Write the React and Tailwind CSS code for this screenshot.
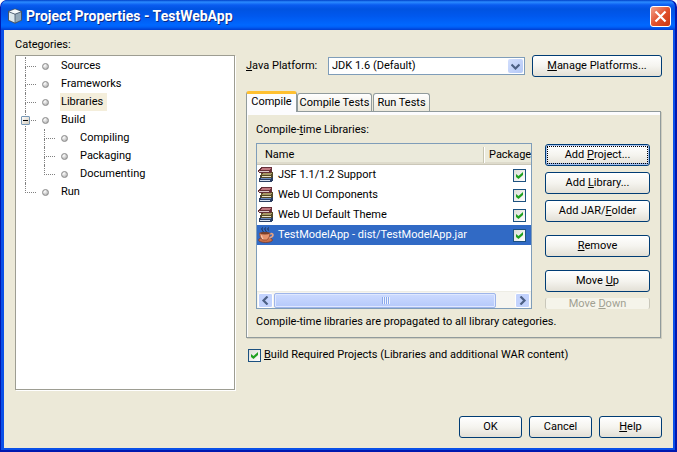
import { useState } from 'react'

const categories = [
  { name: 'Sources' },
  { name: 'Frameworks' },
  { name: 'Libraries' },
  { name: 'Build', children: ['Compiling', 'Packaging', 'Documenting'] },
  { name: 'Run' },
]

const initialLibraries = [
  { name: 'JSF 1.1/1.2 Support', type: 'library', packaged: true },
  { name: 'Web UI Components', type: 'library', packaged: true },
  { name: 'Web UI Default Theme', type: 'library', packaged: true },
  { name: 'TestModelApp - dist/TestModelApp.jar', type: 'jar', packaged: true },
]

function CubeIcon() {
  return (
    <svg className="h-4 w-4 shrink-0" viewBox="0 0 16 16" aria-hidden="true">
      <path d="M8 0.5 15 3v9.5L8 15.8 1 12.5V3z" fill="#44566a" />
      <path d="M8 1.3 13.8 3.4 8 5.8 2.2 3.4z" fill="#f4f9fb" />
      <path d="M2 4.2 7.6 6.5v8L2 12z" fill="#dce8ec" />
      <path d="M14 4.2 8.4 6.5v8L14 12z" fill="#93a9b8" />
    </svg>
  )
}

function BooksIcon() {
  return (
    <svg className="h-4 w-4 shrink-0" viewBox="0 0 16 16" shapeRendering="crispEdges" aria-hidden="true">
      {/* bottom book */}
      <path d="M3 10h12v3l-2 2H1v-4z" fill="#2b3f63" />
      <path d="M3 11h10l-1 1H2z" fill="#6d8cc0" />
      <path d="M2 13h10v1H2z" fill="#d5dfef" />
      {/* middle book */}
      <path d="M4 5h11v4l-2 2H3L2 9z" fill="#544a28" />
      <path d="M5 6h9l-1 2H4z" fill="#a59762" />
      <path d="M4 9h9v1H4z" fill="#e8e2c6" />
      {/* top book */}
      <path d="M4 0h10v4l-2 2H1L0 5V3z" fill="#663038" />
      <path d="M4 1h9l-2 2H2z" fill="#c17880" />
      <path d="M1 4h10v1H1z" fill="#dccbcd" />
    </svg>
  )
}

function CoffeeIcon() {
  return (
    <svg className="h-4 w-4 shrink-0" viewBox="0 0 16 16" aria-hidden="true">
      <path d="M4.500 0.500q-1.500 1.500 0 3t0 2M7.500 0.500q-1.500 1.500 0 3t0 2M10.500 0.500q-1.500 1.500 0 3" fill="none" stroke="#1d2c48" />
      <ellipse cx="7.500" cy="13" rx="7" ry="2.500" fill="#c9714b" stroke="#7b3520" strokeWidth="0.7" />
      <path d="M11.500 7q3.500-1 3.500 1t-4 3" fill="none" stroke="#eba583" strokeWidth="1.600" />
      <path d="M1.500 6h10.500q0 4.500-3 7H4.500q-3-2.500-3-7z" fill="#e6946e" stroke="#8a4229" strokeWidth="0.7" />
      <ellipse cx="6.800" cy="6.200" rx="4.600" ry="1.200" fill="#7a3f2a" />
      <path d="M3.500 8.500q.5 2.500 1.500 3.500" stroke="#fbdcc8" fill="none" />
    </svg>
  )
}

function Arrow({ d }) {
  return (
    <svg className="h-[9px] w-[9px]" viewBox="0 0 9 9" fill="none" stroke="#4d6185" strokeWidth="2.2" aria-hidden="true">
      <path d={d} />
    </svg>
  )
}

function Check({ label, ...props }) {
  return (
    <span className="grid h-[13px] w-[13px] shrink-0 place-items-center">
      <input
        type="checkbox"
        aria-label={label}
        className="peer col-start-1 row-start-1 h-[13px] w-[13px] appearance-none border border-[#1c5180] bg-linear-to-br from-[#dcdcd7] to-white"
        {...props}
      />
      <svg className="pointer-events-none invisible col-start-1 row-start-1 h-[7px] w-[7px] peer-checked:visible" viewBox="0 0 7 7" aria-hidden="true">
        <path d="M0 2v3l2.500 2L7 3V0L2.500 4z" fill="#21a121" />
      </svg>
    </span>
  )
}

function Button({ className = '', children, ...props }) {
  return (
    <button
      type="button"
      className={`h-[22px] rounded-[3px] border border-[#003c74] bg-linear-to-b from-white via-[#f5f4ef] to-[#e3e0d6] text-center leading-4 ${className}`}
      {...props}
    >
      {children}
    </button>
  )
}

function TreeRow({ name, last, expander, selected, onSelect }) {
  return (
    <div className="relative flex h-[18px] items-center">
      <span className="h-full w-[11px] shrink-0">
        <span className="block h-[10px] border-b border-l border-dotted border-[#808080]" />
        {!last && <span className="block h-2 border-l border-dotted border-[#808080]" />}
      </span>
      {expander && (
        <button
          type="button"
          aria-label="Collapse"
          className="absolute top-[5px] -left-1 flex h-[9px] w-[9px] items-center justify-center rounded-[1px] border border-[#7898b5] bg-linear-to-br from-white to-[#d2cabb]"
        >
          <span className="h-px w-[5px] bg-black" />
        </button>
      )}
      <span className="ml-[6px] h-[7px] w-[7px] shrink-0 rounded-full border border-[#8a8a8a] bg-radial-[at_35%_30%] from-white to-[#a0a0a0]" />
      <button
        type="button"
        onClick={onSelect}
        className={`ml-[11px] h-[18px] pr-1 pl-px leading-[18px] ${selected ? 'bg-[#f4eedb]' : ''}`}
      >
        {name}
      </button>
    </div>
  )
}

export default function App() {
  const [category, setCategory] = useState('Libraries')
  const [libraries, setLibraries] = useState(initialLibraries)
  const [current, setCurrent] = useState(3)

  const togglePackaged = (index) => {
    setLibraries(libraries.map((lib, i) => (i === index ? { ...lib, packaged: !lib.packaged } : lib)))
  }

  return (
    <div className="flex min-h-screen flex-col rounded-t-[7px] bg-[#0018b0] pr-[2px] pb-[2px] pl-px font-['Roboto','Liberation_Sans',sans-serif] text-[11px] leading-4 whitespace-nowrap text-black">
      <div className="flex flex-1 flex-col rounded-t-[7px] bg-[#0a50e8]">
        <header className="flex h-[30px] shrink-0 items-center rounded-t-[7px] bg-[linear-gradient(#0040c8_0px,#2b8bff_2px,#0a5cf0_5px,#0053e1_9px,#0058ee_16px,#0068ff_25px,#0060f8_27px,#003dd0_30px)] pt-[2px] pr-1 pl-[6px]">
          <CubeIcon />
          <h1 className="ml-[3px] flex-1 text-[14px] font-bold text-white [text-shadow:1px_1px_#0a2a8a]">
            Project Properties - TestWebApp
          </h1>
          <button
            type="button"
            aria-label="Close"
            className="flex h-[21px] w-[21px] items-center justify-center rounded-[3px] border border-white bg-linear-to-br from-[#f0a08a] via-[#e2512c] to-[#c8360e]"
          >
            <svg className="h-[13px] w-[13px]" viewBox="0 0 13 13" stroke="#fff" strokeWidth="2.200" aria-hidden="true">
              <path d="M1.500 1.500l10 10M11.500 1.500l-10 10" />
            </svg>
          </button>
        </header>

        <div className="mr-[2px] mb-[2px] ml-[3px] flex flex-1 flex-col bg-[#ece9d8] pr-[11px] pb-[10px] pl-[11px]">
          <div className="flex flex-1 gap-[11px]">
            {/* Category tree */}
            <nav className="flex w-[220px] shrink-0 flex-col pt-[7px]">
              <h2>Categories:</h2>
              <ul className="mt-[2px] flex-1 border border-[#9d9d92] bg-white pt-px pl-[9px] shadow-[1px_1px_#fff]">
                {categories.map((item, i) => (
                  <li key={item.name}>
                    <TreeRow
                      name={item.name}
                      last={i === categories.length - 1}
                      expander={!!item.children}
                      selected={category === item.name}
                      onSelect={() => setCategory(item.name)}
                    />
                    {item.children && (
                      <ul className="border-l border-dotted border-[#808080] pl-[18px]">
                        {item.children.map((child, j) => (
                          <li key={child}>
                            <TreeRow
                              name={child}
                              last={j === item.children.length - 1}
                              selected={category === child}
                              onSelect={() => setCategory(child)}
                            />
                          </li>
                        ))}
                      </ul>
                    )}
                  </li>
                ))}
              </ul>
            </nav>

            <main className="min-w-0 flex-1 pt-[25px]">
              <div className="flex items-center">
                <label htmlFor="platform" className="w-[82px]">
                  <u>J</u>ava Platform:
                </label>
                <div className="grid flex-1 items-center">
                  <select
                    id="platform"
                    className="col-start-1 row-start-1 h-[18px] w-full appearance-none border border-[#7f9db9] bg-white pl-[3px] leading-4"
                  >
                    <option>JDK 1.6 (Default)</option>
                  </select>
                  <span className="pointer-events-none col-start-1 row-start-1 mr-[2px] flex h-[14px] w-[15px] items-center justify-center justify-self-end rounded-[2px] bg-linear-to-br from-[#d3dffd] to-[#b4c8f6]">
                    <Arrow d="M0.500 2.500l4 4 4-4" />
                  </span>
                </div>
                <Button className="ml-[7px] w-[130px]">
                  <u>M</u>anage Platforms...
                </Button>
              </div>

              <div role="tablist" className="mt-[14px] flex h-5 items-end">
                <button
                  type="button"
                  role="tab"
                  aria-selected="true"
                  className="relative -mb-px h-[21px] w-[51px] rounded-t-[3px] border-x border-t-[3px] border-x-[#919b9c] border-t-[#ffc030] bg-[#fcfcfe] pb-[2px] leading-4"
                >
                  Compile
                </button>
                <button
                  type="button"
                  role="tab"
                  className="h-[18px] w-[75px] rounded-t-[3px] border border-b-0 border-[#919b9c] bg-linear-to-b from-white to-[#ece9dc] leading-4"
                >
                  Compile Tests
                </button>
                <button
                  type="button"
                  role="tab"
                  className="ml-px h-[18px] w-[57px] rounded-t-[3px] border border-b-0 border-[#919b9c] bg-linear-to-b from-white to-[#ece9dc] leading-4"
                >
                  Run Tests
                </button>
              </div>

              <section className="mr-px border border-[#919b9c] pt-[10px] pr-[10px] pb-[7px] pl-[9px] shadow-[inset_0_3px_#fcfcfe,inset_1px_0_#fcfcfe,1px_1px_#d0cebf]">
                <h3>
                  Compile-<u>t</u>ime Libraries:
                </h3>
                <div className="mt-[5px] flex gap-[13px]">
                  <div className="flex min-w-0 flex-1 flex-col overflow-hidden border border-[#7f9db9] bg-white">
                    <table className="w-full table-fixed border-collapse">
                      <thead>
                        <tr className="h-[21px] bg-[#ebeadb] shadow-[inset_0_-1px_#cbc7b8,inset_0_-3px_#dedbcc]">
                          <th className="pl-2 text-left font-normal">Name</th>
                          <th className="w-12 p-0 text-left font-normal">
                            <span className="block border-l border-[#c7c5b2] pl-[5px] shadow-[inset_1px_0_#fff]">Package</span>
                          </th>
                        </tr>
                      </thead>
                      <tbody>
                        {libraries.map((lib, i) => (
                          <tr
                            key={lib.name}
                            onClick={() => setCurrent(i)}
                            className={`h-5 ${current === i ? 'bg-[#316ac5] text-white' : ''}`}
                          >
                            <td className="p-0 pl-px">
                              <span className="flex items-center gap-1">
                                {lib.type === 'jar' ? <CoffeeIcon /> : <BooksIcon />}
                                {lib.name}
                              </span>
                            </td>
                            <td className="p-0 pl-[30px]">
                              <Check label={`Package ${lib.name}`} checked={lib.packaged} onChange={() => togglePackaged(i)} />
                            </td>
                          </tr>
                        ))}
                      </tbody>
                    </table>

                    {/* Horizontal scroll bar */}
                    <div className="mt-auto flex h-[17px] items-center border-t border-[#eeede5] bg-[#f6f5f0] px-px">
                      <button
                        type="button"
                        aria-label="Scroll left"
                        className="flex h-[15px] w-[15px] items-center justify-center rounded-[2px] border border-white bg-[#c3d3fd]"
                      >
                        <Arrow d="M6.500 0.500l-4 4 4 4" />
                      </button>
                      <div className="ml-px flex h-[15px] w-[222px] items-center justify-center gap-px rounded-[2px] border border-[#9eb5ea] bg-linear-to-b from-[#cddbff] to-[#b5c9fa] shadow-[inset_0_0_0_1px_#dfe8ff]">
                        {[0, 1, 2, 3].map((n) => (
                          <span key={n} className="h-[7px] w-px bg-[#8ca9ec] shadow-[1px_0_#eef4fe]" />
                        ))}
                      </div>
                      <button
                        type="button"
                        aria-label="Scroll right"
                        className="ml-auto flex h-[15px] w-[15px] items-center justify-center rounded-[2px] border border-white bg-[#c3d3fd]"
                      >
                        <Arrow d="M2.500 0.500l4 4-4 4" />
                      </button>
                    </div>
                  </div>

                  <div className="flex w-[105px] flex-col gap-[6px] pt-px">
                    <Button className="shadow-[inset_0_0_0_1px_#a9c3f0,inset_0_-2px_#8fb0ea]">
                      <span className="mx-px flex h-[18px] items-center justify-center border border-dotted border-black">
                        <span>
                          Add <u>P</u>roject...
                        </span>
                      </span>
                    </Button>
                    <Button>
                      Add <u>L</u>ibrary...
                    </Button>
                    <Button>
                      Add JAR/<u>F</u>older
                    </Button>
                    <Button className="mt-[7px]">
                      <u>R</u>emove
                    </Button>
                    <Button className="mt-[7px]">
                      Move <u>U</u>p
                    </Button>
                    <button
                      type="button"
                      disabled
                      className="h-[11px] rounded-[2px] border-x border-[#c9c7ba] bg-[#f5f4ea] leading-[11px] text-[#a1a192]"
                    >
                      Move <u>D</u>own
                    </button>
                  </div>
                </div>
                <p className="mt-[5px]">Compile-time libraries are propagated to all library categories.</p>
              </section>

              <div className="mt-[9px] ml-[2px] flex items-center gap-[3px]">
                <Check id="build-required" defaultChecked />
                <label htmlFor="build-required">
                  <u>B</u>uild Required Projects (Libraries and additional WAR content)
                </label>
              </div>
            </main>
          </div>

          <footer className="mt-[26px] flex justify-end gap-[7px]">
            <Button className="w-[63px]">OK</Button>
            <Button className="w-[63px]">Cancel</Button>
            <Button className="w-[63px]">
              <u>H</u>elp
            </Button>
          </footer>
        </div>
      </div>
    </div>
  )
}
